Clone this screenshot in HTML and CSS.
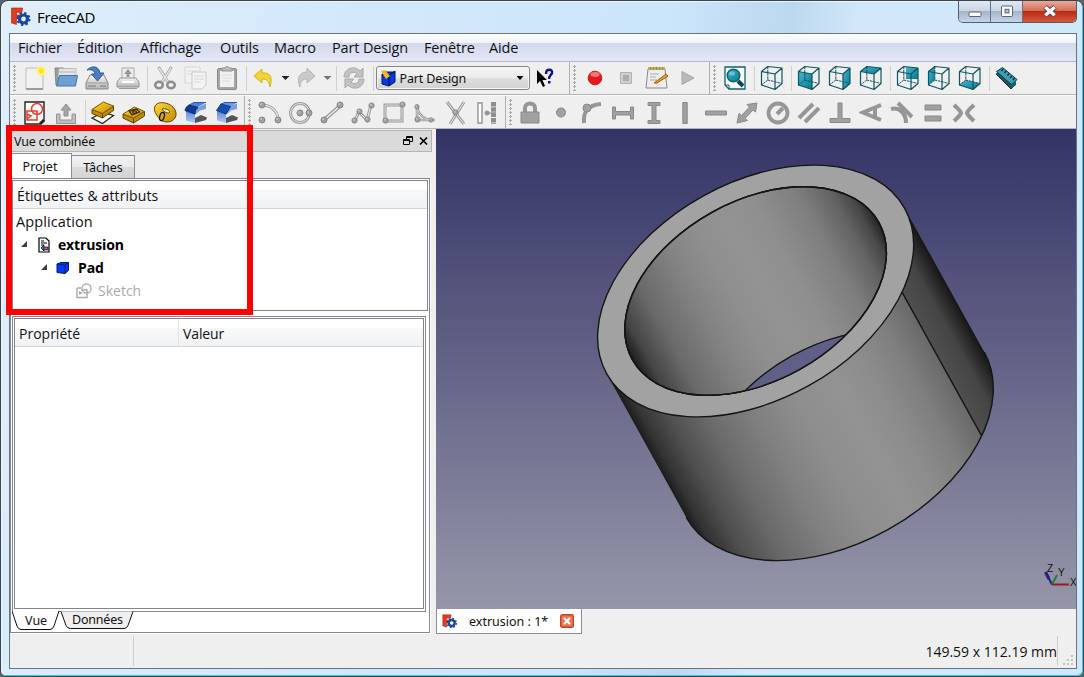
FILE: index.html
```html
<!DOCTYPE html>
<html lang="fr">
<head>
<meta charset="utf-8">
<title>FreeCAD</title>
<link rel="stylesheet" href="styles.css">
</head>
<body>
<svg class="defs" width="0" height="0">
  <defs>
    <linearGradient id="teal" x1="0" y1="0" x2="1" y2="1"><stop offset="0" stop-color="#4fb4d0"/><stop offset="1" stop-color="#007a90"/></linearGradient>
    <linearGradient id="gold" x1="0" y1="0" x2="1" y2="1"><stop offset="0" stop-color="#ffd83a"/><stop offset="1" stop-color="#c28a00"/></linearGradient>
    <linearGradient id="silver" x1="0" y1="0" x2="0" y2="1"><stop offset="0" stop-color="#f4f4f4"/><stop offset="1" stop-color="#b4b4b4"/></linearGradient>
    <linearGradient id="blue" x1="0" y1="0" x2="0" y2="1"><stop offset="0" stop-color="#5b86d8"/><stop offset="1" stop-color="#b6caf4"/></linearGradient>
    <linearGradient id="outer" gradientUnits="userSpaceOnUse" x1="-170.4" y1="0" x2="170.4" y2="0">
      <stop offset="0" stop-color="#1c1c1c"/><stop offset=".03" stop-color="#343434"/><stop offset=".1" stop-color="#505050"/><stop offset=".2" stop-color="#6b6b6b"/><stop offset=".33" stop-color="#818181"/><stop offset=".45" stop-color="#8e8e8e"/><stop offset=".58" stop-color="#939393"/><stop offset=".68" stop-color="#8c8c8c"/><stop offset=".78" stop-color="#7f7f7f"/><stop offset=".873" stop-color="#696969"/><stop offset=".874" stop-color="#505050"/><stop offset=".94" stop-color="#444"/><stop offset="1" stop-color="#161616"/>
    </linearGradient>
    <linearGradient id="inner" gradientUnits="userSpaceOnUse" x1="-141" y1="0" x2="141" y2="0">
      <stop offset="0" stop-color="#1c1c1c"/><stop offset=".05" stop-color="#454545"/><stop offset=".15" stop-color="#6a6a6a"/><stop offset=".3" stop-color="#838383"/><stop offset=".42" stop-color="#8f8f8f"/><stop offset=".53" stop-color="#939393"/><stop offset=".65" stop-color="#8f8f8f"/><stop offset=".8" stop-color="#7e7e7e"/><stop offset=".9" stop-color="#636363"/><stop offset=".96" stop-color="#484848"/><stop offset="1" stop-color="#242424"/>
    </linearGradient>
    <clipPath id="bore"><ellipse rx="141" ry="90"/></clipPath>
    <symbol id="wire" viewBox="0 0 24 26"><path d="M1.5 6.5 15 9V24.5L1.5 20ZM7.8 1.5 22 3V18.5L15 24.5M22 3 15 9M1.5 6.5 7.8 1.5" fill="none" stroke="#0e5563" stroke-width="1.2" stroke-linejoin="round"/><path d="M7.8 1.5V15L1.5 20M7.8 15 22 18.5" fill="none" stroke="#0e5563" stroke-width="1" stroke-dasharray="2.5 .8"/></symbol>
    <symbol id="freecad" viewBox="0 0 20 20"><path d="M1 1H12L11.5 5.5H6V8H10V12H6V17.5L1 16Z" fill="#e03c1c" stroke="#a92010" stroke-width=".6"/><circle cx="13" cy="12" r="4" fill="none" stroke="#1a479c" stroke-width="3.2"/><circle cx="13" cy="12" r="6" fill="none" stroke="#1a479c" stroke-width="2" stroke-dasharray="2.3 2.41"/></symbol>
    <symbol id="ball" viewBox="0 0 8 8"><circle cx="4" cy="4" r="3" fill="#a0a0a0" stroke="#858585"/><circle cx="3.2" cy="3" r="1" fill="#c8c8c8"/></symbol>
  </defs>
</svg>
<div class="window">
  <header class="title">
    <svg class="logo" width="21" height="20"><use href="#freecad"/></svg>
    <span class="caption">FreeCAD</span>
    <div class="controls">
      <span class="ctl"><svg width="14" height="16"><rect x="1" y="9" width="12" height="4.5" rx="1" fill="#fff" stroke="#5b6477"/></svg></span>
      <span class="ctl"><svg width="14" height="16"><rect x="1.5" y="3" width="11" height="10.5" rx="1" fill="#fff" stroke="#5b6477"/><rect x="5" y="6.3" width="4" height="3.6" fill="#b7c4d6" stroke="#5b6477"/></svg></span>
      <span class="ctl close"><svg width="16" height="16"><path d="M3 4 13 12.5M13 4 3 12.5" stroke="#5a4450" stroke-width="5.2"/><path d="M3.3 4.3 12.7 12.2M12.7 4.3 3.3 12.2" stroke="#fff" stroke-width="3.4"/></svg></span>
    </div>
  </header>
  <div class="client">
    <nav class="menu"><span class="m1">Fichier</span><span class="m2">Édition</span><span class="m3">Affichage</span><span class="m4">Outils</span><span class="m5">Macro</span><span class="m6">Part Design</span><span class="m7">Fenêtre</span><span class="m8">Aide</span></nav>

    <div class="bar">
      <div class="group g-file"><i class="grip"></i>
        <span class="btn"><svg viewBox="0 0 24 26"><path d="M3 3H20V24H3Z" fill="#f1f1f1" stroke="#bbb"/><path d="M3 24H20" stroke="#888" stroke-width="1.5"/><circle cx="18" cy="6" r="5" fill="#fff27a" opacity=".8"/><circle cx="18" cy="6" r="2.500" fill="#ffe600"/></svg></span>
        <span class="btn"><svg viewBox="0 0 24 26"><path d="M1 3H9L11 4H20V20H2Z" fill="#9c9c97" stroke="#868686"/><path d="M5 3.500H22V12H4Z" fill="#e4e4e4" stroke="#aaa" stroke-width=".6"/><path d="M5 7H21" stroke="#b5b5b5"/><path d="M5.500 10.500H23.500L21.500 21H2.500Z" fill="#6e9fd2" stroke="#4475ad"/></svg></span>
        <span class="btn"><svg viewBox="0 0 24 26"><path d="M5 10H19L23 18V24H1V18Z" fill="url(#silver)" stroke="#858585"/><path d="M1.500 18H22.500" stroke="#999"/><path d="M3 21H11M15 21H21" stroke="#777"/><path d="M2 5C7 0 14 1 15 8H19L12.500 16 6.500 9H10C9 5 6 4 2 5Z" fill="#4d7fc0" stroke="#2f5c9c"/></svg></span>
        <span class="btn"><svg viewBox="0 0 24 26"><path d="M6 3H18V15H6Z" fill="#eee" stroke="#aaa"/><path d="M12 4 16 9H13.500V12H10.500V9H8Z" fill="#999"/><path d="M4 13H20L23 17V22H1V17Z" fill="url(#silver)" stroke="#929292"/><path d="M6 17H18" stroke="#fff" stroke-width="2"/><path d="M3 23.500H21" stroke="#999"/></svg></span>
        <i class="sep"></i>
        <span class="btn"><svg viewBox="0 0 24 26"><path d="M5.500 2 15 17M18.500 2 9 17" stroke="#aaa" stroke-width="3"/><path d="M6 3 15 17M18 3 9 17" stroke="#eee" stroke-width="1.300"/><ellipse cx="6" cy="20" rx="3.800" ry="3.300" fill="none" stroke="#8d8d8d" stroke-width="2.500"/><ellipse cx="18" cy="20" rx="3.800" ry="3.300" fill="none" stroke="#8d8d8d" stroke-width="2.500"/></svg></span>
        <span class="btn faded"><svg viewBox="0 0 24 26"><path d="M1 2H16V18H1Z" fill="#f6f6f6" stroke="#ccc"/><path d="M3 6H14M3 9H14" stroke="#ccc"/><path d="M8 7H22V20L18 24H8Z" fill="#f6f6f6" stroke="#bbb"/><path d="M10 11H20M10 14H20M10 17H17" stroke="#ccc"/></svg></span>
        <span class="btn"><svg viewBox="0 0 24 26"><rect x="2.500" y="3.500" width="19" height="21" rx="1.500" fill="#a6a6a6" stroke="#8a8a8a"/><path d="M5 6H19V22H5Z" fill="#f1f1f1"/><path d="M7 6V3H10C10 1 14 1 14 3H17V6Z" fill="#bcbcbc" stroke="#929292"/><path d="M7 10H17M7 13H17M7 16H15" stroke="#dcdcdc"/></svg></span>
        <i class="sep"></i>
        <span class="btn"><svg viewBox="0 0 24 26"><path d="M2 11 10 4V8C18 7 21 12 18 22 17 16 15 14 10 14V18Z" fill="#f2d531" stroke="#d2b321"/></svg></span><i class="drop"></i>
        <span class="btn"><svg viewBox="0 0 24 26"><path d="M20 11 12 3V7C5 7 1 13 5 22 5 16 8 14 12 14V18Z" fill="#c9cbcb" stroke="#b2b5b5"/></svg></span><i class="drop dim"></i>
        <i class="sep"></i>
        <span class="btn"><svg viewBox="0 0 24 26"><path d="M2 12C2 3 13 0 18 6L21 3V12H12L15 9C12 6 7 7 7 12ZM22 14C22 23 11 26 6 20L3 23V14H12L9 17C12 20 17 19 17 14Z" fill="#c2c2c2" stroke="#a8a8a8"/></svg></span>
        <i class="sep"></i>
        <div class="combo"><svg width="18" height="18"><path d="M2 5 9 6V17L2 15ZM9 6 15 2V13L9 17ZM5 3H15L9 6" fill="#0638e8" stroke="#001a4d" stroke-linejoin="round"/><path d="M1 2 5 1 10 7 6 10Z" fill="#f0b62b"/></svg><span>Part Design</span><i></i></div>
        <span class="btn"><svg viewBox="0 0 24 26"><path d="M4 5V19L7 16 10 22 12 21 9.500 15H14Z"/><path d="M13 9C13 3 20 4 19 8 18 11 16 10 16 14" fill="none" stroke="#11118c" stroke-width="2.400"/><path d="M15 16H17.500V18.500H15Z" fill="#11118c"/></svg></span>
      </div>
      <div class="group g-macro"><i class="grip"></i>
        <span class="btn"><svg viewBox="0 0 24 26"><circle cx="12" cy="13" r="6.800" fill="#e81919" stroke="#cc1a1a"/><ellipse cx="12" cy="9.500" rx="4.500" ry="2.400" fill="#f77"/></svg></span>
        <span class="btn"><svg viewBox="0 0 24 26"><path d="M6.500 7.500H17.500V18.500H6.500Z" fill="#cfcfcf" stroke="#b2b2b2"/><path d="M9 10H15V16H9Z" fill="#adadad"/></svg></span>
        <span class="btn"><svg viewBox="0 0 24 26"><path d="M3 4H20L22 23H1Z" fill="#ededed" stroke="#888"/><path d="M3 2H20V5H3Z" fill="#998f34"/><path d="M4 2V5M7 2V5M10 2V5M13 2V5M16 2V5M19 2V5" stroke="#ded08b"/><path d="M5 9H14M5 12H11M5 15H12" stroke="#aaa"/><path d="M9 18 21 9 23 11 12 18Z" fill="#eb9c2d" stroke="#a75e14"/></svg></span>
        <span class="btn"><svg viewBox="0 0 24 26"><path d="M6 6.500 18 13 6 19.500Z" fill="#bababa" stroke="#a6a6a6"/></svg></span>
      </div>
      <div class="group g-view"><i class="grip"></i>
        <span class="btn"><svg viewBox="0 0 24 26"><path d="M2 2H22V24H6L2 20Z" fill="#fff" stroke="#0d6071" stroke-width="1.300"/><path d="M2 20H6V24" fill="none" stroke="#0d6071"/><path d="M15 16 20 21" stroke="#10464f" stroke-width="4"/><circle cx="10.500" cy="10.500" r="6.300" fill="url(#teal)" stroke="#10606f" stroke-width="1.500"/><ellipse cx="9" cy="8.500" rx="3" ry="2" fill="#85d0e0" opacity=".7"/></svg></span>
        <i class="sep"></i>
        <span class="btn"><svg viewBox="0 0 24 26"><use href="#wire"/></svg></span>
        <i class="sep"></i>
        <span class="btn"><svg viewBox="0 0 24 26"><path d="M1.500 6.500 15 9V24.500L1.500 20Z" fill="url(#teal)"/><use href="#wire"/></svg></span>
        <span class="btn"><svg viewBox="0 0 24 26"><path d="M15 9 22 3V18.500L15 24.500Z" fill="url(#teal)"/><use href="#wire"/></svg></span>
        <span class="btn"><svg viewBox="0 0 24 26"><path d="M1.500 6.500 7.800 1.500 22 3 15 9Z" fill="url(#teal)"/><use href="#wire"/></svg></span>
        <i class="sep"></i>
        <span class="btn"><svg viewBox="0 0 24 26"><path d="M10 1.800 22 3V14H10Z" fill="url(#teal)"/><use href="#wire"/></svg></span>
        <span class="btn"><svg viewBox="0 0 24 26"><path d="M1.500 6.500 7.800 1.500V15L1.500 20Z" fill="url(#teal)"/><use href="#wire"/></svg></span>
        <span class="btn"><svg viewBox="0 0 24 26"><path d="M1.500 20 7.800 15 22 18.500 15 24.500Z" fill="url(#teal)"/><use href="#wire"/></svg></span>
        <i class="sep"></i>
        <span class="btn"><svg viewBox="0 0 24 26"><path d="M1 9 5 7 20 20 16 24Z" fill="#2b5058" stroke="#16313a"/><path d="M1.500 6.500 7.500 2.500 22 14.500 17 20Z" fill="#3b9fb6" stroke="#163a44"/><path d="M8 4 6.500 6M11 6 9.500 8M14 8.500 12.500 10.500M17 11 15 13M19.500 13 18 15" stroke="#0a2c35" stroke-width="1.300"/><path d="M16 19 21 15V20L17 23Z" fill="#14646f"/></svg></span>
      </div>
    </div>

    <div class="bar bar2">
      <div class="group g-part"><i class="grip"></i>
        <span class="btn"><svg viewBox="0 0 24 26"><path d="M2 2H21V21L17 24H2Z" fill="#fff" stroke="#222" stroke-width="1.400"/><path d="M21 20 17 24" stroke="#222" stroke-width="3"/><circle cx="14" cy="9" r="5.500" fill="none" stroke="#ef3a2b" stroke-width="1.500"/><path d="M4 11H14V20H4ZM4 14 8 16 4 19" fill="none" stroke="#ef3a2b" stroke-width="1.500"/></svg></span>
        <span class="btn"><svg viewBox="0 0 24 26"><path d="M2.500 14V23.500H21.500V14H18V20H6V14Z" fill="#bdbdbd" stroke="#959595"/><path d="M12 4 17 10H14V16H10V10H7Z" fill="#a6a6a6" stroke="#8c8c8c"/></svg></span>
        <i class="sep"></i>
        <span class="btn"><svg viewBox="0 0 24 26"><path d="M1 18 12 12.500 22.500 15.500 11.500 23.500Z" fill="#fff" stroke="#222" stroke-width="1.200"/><path d="M1 9.500 11.500 13.500V18L1 13.500ZM11.500 13.500 22.500 6V10.500L11.500 18Z" fill="#c08c08" stroke="#5b4300" stroke-linejoin="round"/><path d="M1 9.500 12.300 2 22.500 6 11.500 13.500Z" fill="url(#gold)" stroke="#7c5c00" stroke-linejoin="round"/></svg></span>
        <span class="btn"><svg viewBox="0 0 24 26"><path d="M1 14 11.500 18V23L1 18ZM11.500 18 22.500 11.500V16L11.500 23Z" fill="#c08c08" stroke="#5b4300" stroke-linejoin="round"/><path d="M1 14 12.500 7 22.500 11.500 11.500 18Z" fill="url(#gold)" stroke="#7c5c00" stroke-linejoin="round"/><path d="M7 11 14.500 9 17.500 12 10 15ZM10.500 12A2 1.200 0 1 0 14.500 12A2 1.200 0 1 0 10.500 12" fill="#e0ad16" stroke="#3a2b00" stroke-width="1.300"/></svg></span>
        <span class="btn"><svg viewBox="0 0 24 26"><path fill-rule="evenodd" d="M1.500 8C2 3 8 1.500 14 3.500 21 5.500 24.500 12 22.500 17 20 23 12 23 7.500 20L10.500 13C9 15 8 17 7 19 4 16 1 12 1.500 8ZM9 9C11 12 15 14 16.500 12.500 17.500 10 12 8 9 9Z" fill="url(#gold)" stroke="#624700"/><ellipse cx="9" cy="16.500" rx="2.200" ry="4.200" transform="rotate(15 9 16.500)" fill="#dca916" stroke="#211900" stroke-width="1.400"/></svg></span>
        <span class="btn"><svg viewBox="0 0 24 26"><path d="M11 18 17 15 23 17.500 22 20 11 23Z" fill="#55565c"/><path d="M2 11 11 14V23L2 20.500Z" fill="url(#blue)"/><path d="M13 7.500 22 3.500V9L16 10.500 11 15Z" fill="#7d9ddf"/><path d="M10 2.500H22L13 7.500 5 5Z" fill="#4f7fd6"/><path d="M5 5 14 7.500C12 9 11 11 11 14L1 10.500C1.500 8 3 6 5 5Z" fill="#0a3c98" stroke="#082a6c"/><path d="M5 5 10 2.500H22" stroke="#2858b4" fill="none"/></svg></span>
        <span class="btn"><svg viewBox="0 0 24 26"><path d="M11 18 17 15 23 17.500 22 20 11 23Z" fill="#55565c"/><path d="M2 11 11 14V23L2 20.500Z" fill="url(#blue)"/><path d="M15 6 22 3.500V9L16 10.500 11 15Z" fill="#7d9ddf"/><path d="M10 2.500H22L15.500 6.500 6 4Z" fill="#6c96e0"/><path d="M6 4 15.500 6.500 11 14 1.500 10.500Z" fill="#1450ae" stroke="#0b3580"/><path d="M6 4 10 2.500H22" stroke="#2858b4" fill="none"/></svg></span>
      </div>
      <div class="group g-sketch"><i class="grip"></i>
        <span class="btn"><svg viewBox="0 0 24 26"><path d="M4 5C13 5 20 11 20 20" fill="none" stroke="#a2a2a2" stroke-width="3"/><path d="M4 5C13 5 20 11 20 20" fill="none" stroke="#eee" stroke-width="1.200"/><use href="#ball" x="0" y="1" width="8" height="8"/><use href="#ball" x="0" y="16" width="8" height="8"/><use href="#ball" x="16" y="16" width="8" height="8"/></svg></span>
        <span class="btn"><svg viewBox="0 0 24 26"><circle cx="11" cy="13" r="9.500" fill="none" stroke="#9c9c9c" stroke-width="3"/><circle cx="11" cy="13" r="9.500" fill="none" stroke="#e4e4e4"/><use href="#ball" x="7" y="9" width="8" height="8"/><use href="#ball" x="16" y="9" width="8" height="8"/></svg></span>
        <span class="btn"><svg viewBox="0 0 24 26"><path d="M4 20 20 6" stroke="#9c9c9c" stroke-width="4"/><path d="M4 20 20 6" stroke="#eee" stroke-width="1.300"/><use href="#ball" x="0" y="16" width="8" height="8"/><use href="#ball" x="16" y="1" width="8" height="8"/></svg></span>
        <span class="btn"><svg viewBox="0 0 24 26"><path d="M4 20 8 12 16 20 20 5" fill="none" stroke="#9c9c9c" stroke-width="3"/><path d="M4 20 8 12 16 20 20 5" fill="none" stroke="#eee"/><use href="#ball" x="0" y="17" width="7" height="7"/><use href="#ball" x="5" y="8" width="7" height="7"/><use href="#ball" x="13" y="16" width="7" height="7"/><use href="#ball" x="17" y="2" width="7" height="7"/></svg></span>
        <span class="btn"><svg viewBox="0 0 24 26"><path d="M3 5H20V21H3Z" fill="none" stroke="#9c9c9c" stroke-width="3"/><path d="M3 5H20V21H3Z" fill="none" stroke="#ddd"/><use href="#ball" x="17" y="1" width="7" height="7"/><use href="#ball" x="0" y="17" width="7" height="7"/></svg></span>
        <span class="btn"><svg viewBox="0 0 24 26"><path d="M4 4V20H22M4 8C6 15 12 20 19 20" fill="none" stroke="#9c9c9c" stroke-width="2.500"/><path d="M4 4V20H22M4 8C6 15 12 20 19 20" fill="none" stroke="#ddd" stroke-width=".8"/><use href="#ball" x="1" y="4" width="6" height="6"/><use href="#ball" x="1" y="16" width="7" height="7"/><use href="#ball" x="15" y="17" width="6" height="6"/></svg></span>
        <span class="btn"><svg viewBox="0 0 24 26"><path d="M3 2 20 24M20 2 6 24" stroke="#9c9c9c" stroke-width="3"/><path d="M3 2 20 24M20 2 6 24" stroke="#e5e5e5"/><use href="#ball" x="8" y="9" width="7" height="7"/></svg></span>
        <span class="btn"><svg viewBox="0 0 24 26"><path d="M3 3H7V23H3Z" fill="#fff" stroke="#929292" stroke-width="1.400"/><circle cx="12" cy="13" r="2.500" fill="#999"/><path d="M12 13H21" stroke="#888"/><path d="M18.500 2V24" stroke="#8d8d8d" stroke-width="5" stroke-dasharray="4.500 .8"/></svg></span>
      </div>
      <div class="group g-cons"><i class="grip"></i>
        <span class="btn"><svg class="con" viewBox="0 0 24 26"><path class="ln" d="M7 12V8C7 2 17 2 17 8V12"/><path class="solid" d="M3 12H21V23H3Z"/></svg></span>
        <span class="btn"><svg class="con" viewBox="0 0 24 26"><circle class="solid" cx="12" cy="12.500" r="4.500"/></svg></span>
        <span class="btn"><svg class="con" viewBox="0 0 24 26"><path class="ln" d="M4 23C3 13 7 5 21 4"/><circle class="solid" cx="7" cy="8" r="4"/></svg></span>
        <span class="btn"><svg class="con" viewBox="0 0 24 26"><path class="solid" d="M1.500 7H4.500V11.500H19.500V7H22.500V19H19.500V15H4.500V19H1.500Z"/></svg></span>
        <span class="btn"><svg class="con" viewBox="0 0 24 26"><path class="solid" d="M6 2.500H18V5.500H14V20.500H18V23.500H6V20.500H10V5.500H6Z"/></svg></span>
        <span class="btn"><svg class="con" viewBox="0 0 24 26"><path class="solid" d="M9.800 2.500H14.200V23.500H9.800Z"/></svg></span>
        <span class="btn"><svg class="con" viewBox="0 0 24 26"><path class="solid" d="M1.500 11H22.500V15H1.500Z"/></svg></span>
        <span class="btn"><svg class="con" viewBox="0 0 24 26"><path class="solid" d="M22 3 20.500 12 18 10 10 18.500 12.500 20.500 2 23 4 13.500 6.500 15.500 14.500 7 12 4.500Z"/></svg></span>
        <span class="btn"><svg class="con" viewBox="0 0 24 26"><circle class="rim" cx="12" cy="13" r="9.500"/><path class="ln" d="M11 14 17 8"/></svg></span>
        <span class="btn"><svg class="con" viewBox="0 0 24 26"><path class="ln" d="M2 18 16 4M8 22 22 8"/></svg></span>
        <span class="btn"><svg class="con" viewBox="0 0 24 26"><path class="solid" d="M10 3H14V18.500H22V22.500H2V18.500H10Z"/></svg></span>
        <span class="btn"><svg class="con" viewBox="0 0 24 26"><path class="ln" d="M22 5 4 12.500 22 20M16 9V16"/></svg></span>
        <span class="btn"><svg class="con" viewBox="0 0 24 26"><path class="ln" d="M8 3 22 17M1 9C9 7 16 13 16 23"/></svg></span>
        <span class="btn"><svg class="con" viewBox="0 0 24 26"><path class="solid" d="M4 5H20V10H4ZM4 16H20V21H4Z"/></svg></span>
        <span class="btn"><svg class="con" viewBox="0 0 24 26"><path class="ln" d="M2 5C4 7 8 10 9 13 8 16 4 19 2 21M22 5C20 7 16 10 15 13 16 16 20 19 22 21"/></svg></span>
      </div>
    </div>

    <main class="work">
      <aside class="dock">
        <div class="dockhead"><span>Vue combinée</span><svg width="26" height="12"><path d="M3.500 4V1.500H9.500V6.500H7M.5 4.500H6.500V9.500H.5ZM.5 5.500H6.500M3.500 2.500H9.500" transform="translate(1 0)" fill="none" stroke="#000"/><path d="M18 2.500 25 9.500M25 2.500 18 9.500" stroke="#000" stroke-width="1.700"/></svg></div>
        <div class="tabs"><span class="tab on">Projet</span><span class="tab">Tâches</span></div>
        <section class="pane">
          <div class="tree">
            <div class="thead"><span>Étiquettes &amp; attributs</span></div>
            <div class="row app"><span>Application</span></div>
            <div class="row r1"><i class="tri"></i><svg width="12" height="16"><path d="M1 1H8L11 4V15H1Z" fill="#fff" stroke="#000" stroke-width="1.200"/><path d="M3 4H6M3 6H9M3 8H6" stroke="#000"/><path d="M6 8 3 11 6 14Z" fill="#25b8bc" stroke="#000" stroke-width=".8"/><path d="M6 10H10V13H6Z" fill="#b646ad" stroke="#000" stroke-width=".6"/></svg><b>extrusion</b></div>
            <div class="row r2"><i class="tri"></i><svg width="14" height="14"><path d="M1 3 5 1.500H12.500V9.500L9 12.500 1 11.500Z" fill="#0538f5" stroke="#001b66"/><path d="M1 3 9 4 12.500 1.500M9 4V12.500" stroke="#001b66" fill="none"/></svg><b>Pad</b></div>
            <div class="row r3"><svg width="16" height="16"><circle cx="10.500" cy="5.500" r="4.500" fill="none" stroke="#aaa" stroke-width="1.300"/><path d="M1 5H5M1 5V14.500H11V7H5" fill="none" stroke="#aaa" stroke-width="1.400"/><path d="M3 8 7 10 3 12Z" fill="#aaa"/></svg><span>Sketch</span></div>
          </div>
          <div class="props">
            <div class="ptable"><div class="phead"><span class="pc">Propriété</span><span class="pv">Valeur</span></div></div>
          </div>
          <div class="btabs">
            <svg width="122" height="20"><path d="M49 .5 54 14.500Q55.500 17.500 58.500 17.500H112Q115 17.500 116 14.500L121 .5" fill="#efefef" stroke="#111"/><path d="M0 0 5 15Q6 18.500 9 18.500H38Q41 18.500 42 15L47 0Z" fill="#fff"/><path d="M0 0 5 15Q6 18.500 9 18.500H38Q41 18.500 42 15L47 0" fill="none" stroke="#111"/></svg>
            <span class="vue">Vue</span><span class="don">Données</span>
          </div>
        </section>
      </aside>
      <section class="mdi">
        <div class="viewport">
          <svg class="scene" width="640" height="480" viewBox="436 129 640 480">
            <g transform="translate(755.600 291) rotate(-29)" fill="none" stroke="#151515" stroke-width="1.400">
              <path d="M-170.400 0V164.300A170.400 108.600 0 0 0 170.400 164.300V0Z" fill="url(#outer)" stroke="none"/>
              <path d="M-170.400 164.300A170.400 108.600 0 0 0 170.400 164.300M127.500 72V236"/>
              <path fill-rule="evenodd" fill="#a2a2a2" d="M-170.400 0A170.400 108.600 0 1 1 170.400 0A170.400 108.600 0 1 1-170.400 0ZM-141 0A141 90 0 1 0 141 0A141 90 0 1 0-141 0Z"/>
              <ellipse rx="141" ry="90" fill="url(#inner)"/>
            </g>
            <g transform="translate(755.600 291) rotate(-29)" clip-path="url(#bore)"><ellipse cy="164.300" rx="141" ry="90" fill="#5f5f88" stroke="#151515" stroke-width="1.400"/></g>
            <g transform="translate(755.600 291) rotate(-29)"><ellipse rx="141" ry="90" fill="none" stroke="#151515" stroke-width="1.400"/></g>
            <g fill="none" stroke-width="2"><path d="M1052 584.500 1046 573" stroke="#202080"/><path d="M1049 579 1045.500 572" stroke="#202080" stroke-width="3"/><path d="M1052 584.500 1057 575" stroke="#208030"/><path d="M1052 584.500H1069" stroke="#8c2020"/></g>
            <g class="axis"><text x="1047" y="572">Z</text><text x="1058" y="575.500">Y</text><text x="1070" y="586">X</text></g>
          </svg>
        </div>
        <div class="doctab"><svg width="15" height="15"><use href="#freecad"/></svg><span>extrusion : 1*</span><svg class="x" width="14" height="14"><rect x=".7" y=".7" width="12.600" height="12.600" rx="1.500" fill="#e77852" stroke="#c84424" stroke-width="1.400"/><path d="M4 4 10 10M10 4 4 10" stroke="#fff" stroke-width="2.200"/></svg></div>
      </section>
    </main>
    <footer class="status"><i class="sdiv"></i><span class="dims">149.59 x 112.19 mm</span><i class="sdiv"></i>
      <svg width="12" height="12"><g fill="#c3c3c3"><path d="M8 0H10V2H8ZM4 4H6V6H4ZM8 4H10V6H8ZM0 8H2V10H0ZM4 8H6V10H4ZM8 8H10V10H8Z"/></g></svg></footer>
  </div>
  <div class="highlight"></div>
</div>
</body>
</html>
```
FILE: styles.css
```css
* { box-sizing: border-box; }
body { margin: 0; background: #5c646c; overflow: hidden; font-family: "Open Sans", "Noto Sans", sans-serif; color: #111; }
.defs { position: absolute; }
svg { display: block; flex: none; }
span { white-space: nowrap; }

.window { position: relative; width: 1084px; height: 677px; padding: 0 6px 8px 8px; border: 1px solid #3b434b; border-radius: 8px 8px 6px 6px; background: linear-gradient(100deg, #e0eefa 0, #d6eafa 20%, #cbe5fb 56%, #bcd8ef 66%, #d2e8fa 72%, #cde8fb 100%); box-shadow: inset 1px 1px 0 #e9f7ff, inset -1px -1px 0 #3fc5ea; }
.title { display: flex; height: 32px; padding-left: 1px; }
.logo { margin-top: 6px; }
.caption { margin: 6px 0 0 6px; font-size: 15px; line-height: 21px; letter-spacing: -.35px; color: #000; }
.controls { display: flex; width: 119px; height: 22px; margin-left: auto; border: 1px solid #535c6c; border-top: 0; border-radius: 0 0 5px 5px; overflow: hidden; }
.ctl { display: flex; justify-content: center; width: 32px; padding-top: 2px; border-right: 1px solid #667082; background: linear-gradient(#dfe9f3 0, #c8d5e3 48%, #a5b6c9 50%, #c2d5e6 100%); }
.ctl.close { width: 53px; border: 0; background: linear-gradient(#e9a99b 0, #d6705a 45%, #b92c14 50%, #d3573c 100%); }

.client { display: flex; flex-direction: column; width: 1068px; height: 636px; border: 1px solid #6a727e; background: #efefef; }
.menu, .bar, .work { flex: none; }
.menu { display: flex; height: 28px; font-size: 14.500px; line-height: 27px; border-bottom: 1px solid #b2b5cf; background: linear-gradient(#fff 0, #f0f2f9 32%, #d3d9ed 35%, #e3e7f6 100%); padding-left: 8px; }
.menu span { letter-spacing: -.15px; }
.m1 { width: 59px; } .m2 { width: 63px; } .m3 { width: 80px; } .m4 { width: 54px; } .m5 { width: 58px; } .m6 { width: 92px; } .m7 { width: 65px; }

.bar { display: flex; height: 33px; border-bottom: 1px solid #b4b4b4; }
.bar2 { height: 34px; border-top: 1px solid #fafafa; }
.group { display: flex; align-items: center; border-right: 1px solid #b0b0b0; padding-left: 3px; }
.group:last-child { border: 0; }
.g-file { width: 560px; } .g-macro { width: 140px; } .g-part { width: 235px; } .g-sketch { width: 261px; }
.grip { flex: none; width: 3px; height: 26px; margin-right: 3.500px; background: radial-gradient(circle at 1.500px 1.500px, #aaa 1px, transparent 1.400px) 0 0/3px 4px; }
.g-sketch .grip { margin-right: 3px; }
.g-cons .grip { margin-right: 2.500px; }
.btn { flex: none; display: flex; justify-content: center; width: 31px; }
.btn svg { width: 24px; height: 26px; }
.bar2 .btn svg { position: relative; top: 1px; }
.faded { opacity: .7; }
.sep { flex: none; width: 6px; height: 25px; background: linear-gradient(#cfcfcf, #cfcfcf) 3px 0/1px 100% no-repeat; }
.drop { flex: none; width: 12px; height: 4px; background: #222; clip-path: polygon(2px 0, 10px 0, 6px 4px); }
.drop.dim { width: 10px; background: #777; clip-path: polygon(1px 0, 9px 0, 5px 4px); }
.combo { flex: none; display: flex; align-items: center; width: 154px; height: 24px; padding: 0 5px 0 3px; border: 1px solid #858585; border-radius: 3px; background: linear-gradient(#f5f5f5 0, #ececec 48%, #dedede 52%, #d2d2d2 100%); box-shadow: inset 0 0 0 1px #f7f7f7; font-size: 12.500px; letter-spacing: -.15px; }
.combo span { margin-left: 2px; }
.combo i { width: 7px; height: 4px; margin-left: auto; background: #000; clip-path: polygon(0 0, 100% 0, 50% 100%); }
.combo, .dockhead, .tabs, .btabs, .doctab { font-family: "Noto Sans", sans-serif; }
.con .solid { fill: #a0a0a0; stroke: #898989; }
.con .ln, .con .rim { fill: none; stroke: #969696; stroke-width: 4; }
.con .rim { stroke-width: 3.800; }

.work { display: flex; height: 505px; }
.dock { width: 426px; padding: 1px 0 0; }
.dockhead { display: flex; align-items: center; justify-content: space-between; width: 422px; height: 22px; padding: 0 3px 0 3px; border: 1px solid #b5b5b5; background: #dadada; font-size: 12.500px; letter-spacing: -.2px; }
.tabs { display: flex; align-items: flex-end; height: 26px; font-size: 12.500px; }
.tab { width: 63px; height: 23px; border: 1px solid #898c95; border-bottom: 0; border-left: 0; text-align: center; line-height: 23px; background: linear-gradient(#f2f2f2 0, #eaeaea 50%, #dcdcdc 50%, #d4d4d4 100%); }
.tab.on { width: 62px; height: 25px; background: #fff; border-left: 1px solid #898c95; line-height: 25px; padding-right: 2px; }
.pane { width: 420px; height: 455px; padding: 1px 0 0 1px; border: 1px solid #868994; background: #fff; box-shadow: 1px 1px 0 #fff; }
.tree { width: 416px; height: 131px; border: 1px solid #82858f; background: #fff; }
.thead { height: 28px; padding-left: 4px; border-bottom: 1px solid #d5d5d5; background: linear-gradient(#fff 0, #fff 33%, #f7f8fa 34%, #f1f2f4 100%); font-size: 14px; letter-spacing: .1px; line-height: 29px; }
.row { display: flex; align-items: center; height: 23px; font-size: 14px; }
.row b { font-weight: 700; letter-spacing: -.15px; color: #000; }
.app { height: 24px; padding: 0 0 0 3px; font-size: 14.500px; letter-spacing: .1px; }
.r1 { padding-left: 7px; } .r2 { padding-left: 27px; } .r3 { padding-left: 63px; color: #aaa; }
.tri { width: 8px; height: 7px; background: #3f3f3f; clip-path: polygon(7px 0, 7px 6px, 1px 6px); }
.r1 svg { margin: 0 8px 0 10px; } .r2 svg { margin: 0 8px 0 8px; } .r3 svg { margin-right: 6px; }
.props { width: 414px; height: 296px; margin-top: 5px; padding: 1px; border: 1px solid #868994; background: #fff; }
.ptable { width: 410px; height: 291px; border: 1px solid #82858f; }
.phead { display: flex; height: 28px; border-bottom: 1px solid #d5d5d5; background: linear-gradient(#fff 0, #fff 33%, #f7f8fa 34%, #f1f2f4 100%); font-size: 14px; line-height: 29px; }
.pc { width: 164px; padding-left: 4px; border-right: 1px solid #e0e2e4; }
.pv { padding-left: 4px; letter-spacing: -.1px; }
.btabs { position: relative; height: 20px; margin-top: -1px; font-size: 12.500px; line-height: 18px; padding-left: 0; }
.vue { position: absolute; left: 13px; top: 1px; }
.don { position: absolute; left: 60px; top: 0; letter-spacing: -.2px; }

.mdi { width: 640px; }
.viewport { height: 480px; background: linear-gradient(#333366, #9696aa); }
.axis { font: 10px "Liberation Sans", sans-serif; fill: #111; }
.doctab { display: flex; align-items: center; width: 146px; height: 25px; padding-left: 5px; background: #fff; border: 1px solid #8a8d97; border-top: 0; font-size: 12.500px; }
.doctab span { width: 91px; margin-left: 12px; }

.status { display: flex; flex: 1; min-height: 0; padding-left: 123px; background: #efefef; }
.sdiv { width: 1px; height: 30px; margin-top: 2px; background: #cecece; }
.dims { width: 923px; text-align: right; font-size: 14px; line-height: 35px; }
.status svg { margin: 21px 0 0 5px; }
.highlight { position: absolute; left: 5px; top: 124px; width: 247px; height: 190px; border: 6px solid #f00; }
```
